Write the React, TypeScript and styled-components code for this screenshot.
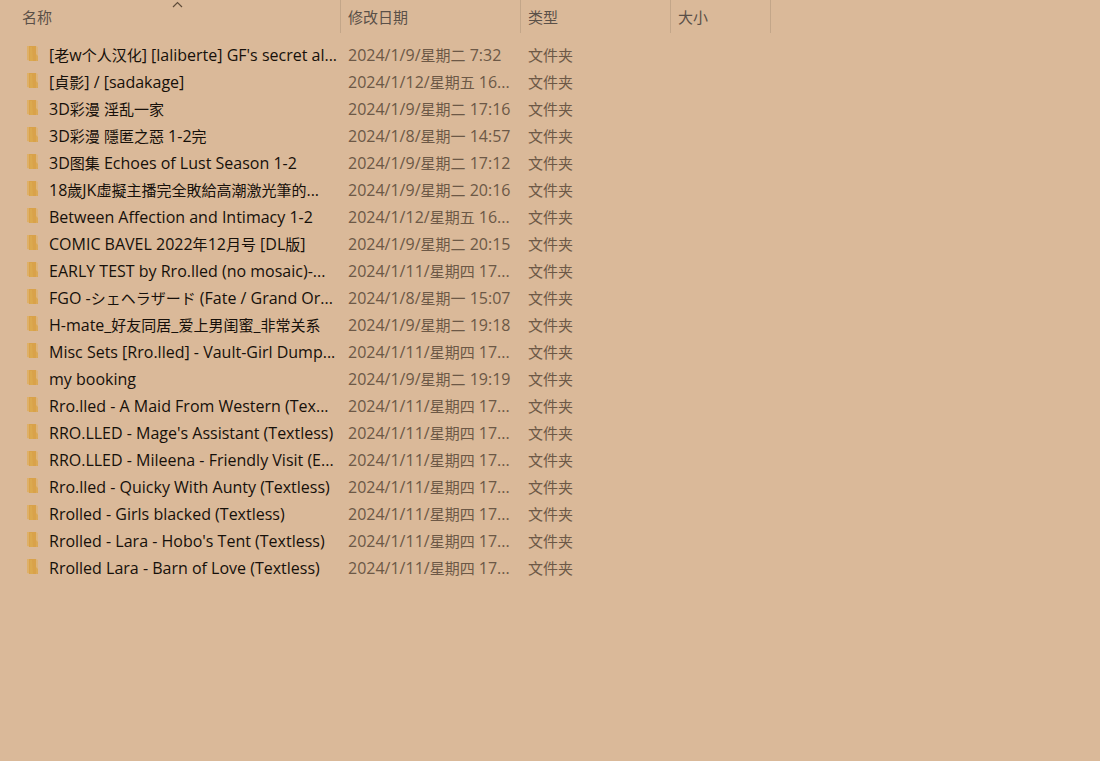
import React from "react";
import styled, { createGlobalStyle } from "styled-components";

const GlobalStyle = createGlobalStyle`
  * { box-sizing: border-box; }
  body {
    margin: 0;
    background: #dab999;
    font-family: "Open Sans", "Noto Sans", "Noto Sans CJK SC", sans-serif;
    font-size: 16px;
    line-height: 27px;
  }
`;

const FileTable = styled.table`
  width: 100%;
  table-layout: fixed;
  border-collapse: collapse;
  text-align: left;
`;

const Column = styled.col<{ $width?: number }>`
  width: ${(p) => (p.$width ? `${p.$width}px` : "auto")};
`;

const HeadCell = styled.th`
  padding: 0 0 9px;
  font-weight: 400;
`;

const SortButton = styled.button<{ $first?: boolean }>`
  position: relative;
  display: block;
  width: 100%;
  height: 33px;
  padding: 1px 0 0 ${(p) => (p.$first ? 22 : 7)}px;
  border: 0;
  border-right: 1px solid #c3a689;
  background: none;
  color: #5a5048;
  font: inherit;
  text-align: left;
`;

const SortMark = styled.svg`
  position: absolute;
  top: 1px;
  left: 172px;
  width: 11px;
  height: 7px;
`;

const Cell = styled.td`
  height: 27px;
  padding: 0 0 0 7px;
  color: #6c5846;
  white-space: nowrap;
`;

const NameCell = styled(Cell)`
  padding: 0 0 0 26px;
  color: #16100a;
`;

const NameContent = styled.div`
  display: flex;
  gap: 9px;
  height: 27px;
`;

const Han = styled.span`
  font-family: "Noto Sans CJK SC", sans-serif;
  font-size: 15px;
  line-height: 1;
`;

const FolderSvg = styled.svg`
  flex: none;
  width: 14px;
  height: 24px;
`;

const FolderIcon = () => (
  <FolderSvg viewBox="0 0 14 24" aria-hidden="true">
    <path d="M1 4h4v15l-4-1z" fill="#dfb067" />
    <path d="M3 4h7v10l2 1v4H3z" fill="#d9a24a" />
    <path d="M4 5h2l1 14H4z" fill="#dba94f" />
    <path d="M10 4l2 1v13l-2 1z" fill="#ddb47c" />
    <path d="M10 12l2 2v4l-2 1z" fill="#dba955" />
  </FolderSvg>
);

/* Han and kana runs are set one size smaller than the Latin text around them. */
const MixedText = ({ children }: { children: string }) => (
  <span>
    {children
      .split(/([\u3040-\u30ff\u4e00-\u9fff]+)/)
      .map((run, i) => (i % 2 ? <Han key={i}>{run}</Han> : run))}
  </span>
);

const files: [string, string][] = [
  ["[老w个人汉化] [laliberte] GF's secret al...", "2024/1/9/星期二 7:32"],
  ["[貞影] / [sadakage]", "2024/1/12/星期五 16..."],
  ["3D彩漫 淫乱一家", "2024/1/9/星期二 17:16"],
  ["3D彩漫 隱匿之惡 1-2完", "2024/1/8/星期一 14:57"],
  ["3D图集 Echoes of Lust Season 1-2", "2024/1/9/星期二 17:12"],
  ["18歲JK虛擬主播完全敗給高潮激光筆的...", "2024/1/9/星期二 20:16"],
  ["Between Affection and Intimacy 1-2", "2024/1/12/星期五 16..."],
  ["COMIC BAVEL 2022年12月号 [DL版]", "2024/1/9/星期二 20:15"],
  ["EARLY TEST by Rro.lled (no mosaic)-...", "2024/1/11/星期四 17..."],
  ["FGO -シェヘラザード (Fate / Grand Or...", "2024/1/8/星期一 15:07"],
  ["H-mate_好友同居_爱上男闺蜜_非常关系", "2024/1/9/星期二 19:18"],
  ["Misc Sets [Rro.lled] - Vault-Girl Dump...", "2024/1/11/星期四 17..."],
  ["my booking", "2024/1/9/星期二 19:19"],
  ["Rro.lled - A Maid From Western (Tex...", "2024/1/11/星期四 17..."],
  ["RRO.LLED - Mage's Assistant (Textless)", "2024/1/11/星期四 17..."],
  ["RRO.LLED - Mileena - Friendly Visit (E...", "2024/1/11/星期四 17..."],
  ["Rro.lled - Quicky With Aunty (Textless)", "2024/1/11/星期四 17..."],
  ["Rrolled - Girls blacked (Textless)", "2024/1/11/星期四 17..."],
  ["Rrolled - Lara - Hobo's Tent (Textless)", "2024/1/11/星期四 17..."],
  ["Rrolled Lara - Barn of Love (Textless)", "2024/1/11/星期四 17..."],
];

export default function App() {
  return (
    <main>
      <GlobalStyle />
      <FileTable>
        <colgroup>
          <Column $width={341} />
          <Column $width={180} />
          <Column $width={150} />
          <Column $width={100} />
          <Column />
        </colgroup>
        <thead>
          <tr>
            <HeadCell aria-sort="ascending">
              <SortButton type="button" $first>
                <MixedText>名称</MixedText>
                <SortMark viewBox="0 0 11 7" aria-hidden="true">
                  <path d="M1 6l4.500-4.500L10 6" fill="none" stroke="#5f4c3a" strokeWidth="1.200" />
                </SortMark>
              </SortButton>
            </HeadCell>
            {["修改日期", "类型", "大小"].map((label) => (
              <HeadCell key={label}>
                <SortButton type="button">
                  <MixedText>{label}</MixedText>
                </SortButton>
              </HeadCell>
            ))}
          </tr>
        </thead>
        <tbody>
          {files.map(([name, date]) => (
            <tr key={name}>
              <NameCell>
                <NameContent>
                  <FolderIcon />
                  <MixedText>{name}</MixedText>
                </NameContent>
              </NameCell>
              <Cell>
                <MixedText>{date}</MixedText>
              </Cell>
              <Cell>
                <MixedText>文件夹</MixedText>
              </Cell>
              <Cell />
            </tr>
          ))}
        </tbody>
      </FileTable>
    </main>
  );
}
